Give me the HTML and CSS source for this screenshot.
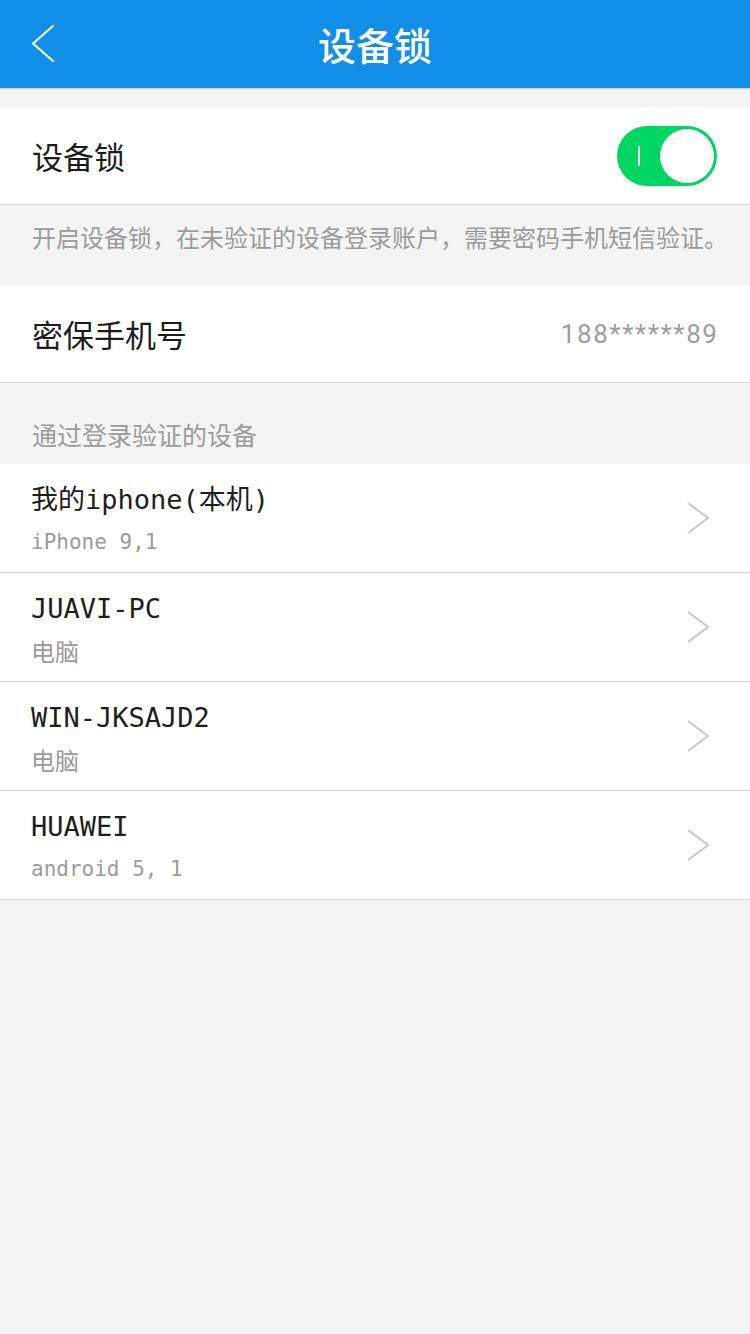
FILE: index.html
```html
<!DOCTYPE html>
<html lang="zh-CN">
<head>
<meta charset="utf-8">
<title>设备锁</title>
<link rel="stylesheet" href="styles.css">
</head>
<body>
<div class="app">
  <header class="nav">
    <a class="back" href="#" aria-label="返回">
      <svg width="24" height="40" viewBox="0 0 24 40"><polyline points="22,2 2,19.5 22,37" fill="none" stroke="#fff" stroke-width="2.2" stroke-linecap="round" stroke-linejoin="round"/></svg>
    </a>
    <h1 class="nav-title">设备锁</h1>
    <span class="nav-side"></span>
  </header>

  <div class="gap"></div>

  <div class="cell">
    <span class="cell-label">设备锁</span>
    <span class="toggle"><span class="toggle-bar"></span><span class="toggle-knob"></span></span>
  </div>

  <p class="note">开启设备锁，在未验证的设备登录账户，需要密码手机短信验证。</p>

  <div class="cell">
    <span class="cell-label">密保手机号</span>
    <span class="cell-value">188******89</span>
  </div>

  <div class="section">通过登录验证的设备</div>

  <ul class="devices">
    <li class="device">
      <div class="device-info">
        <div class="device-name">我的iphone(本机)</div>
        <div class="device-sub">iPhone 9,1</div>
      </div>
      <svg class="chev" width="22" height="32" viewBox="0 0 22 32"><polyline points="1,1 21,16 1,31" fill="none" stroke="#c8c8c8" stroke-width="2"/></svg>
    </li>
    <li class="device">
      <div class="device-info">
        <div class="device-name">JUAVI-PC</div>
        <div class="device-sub cn">电脑</div>
      </div>
      <svg class="chev" width="22" height="32" viewBox="0 0 22 32"><polyline points="1,1 21,16 1,31" fill="none" stroke="#c8c8c8" stroke-width="2"/></svg>
    </li>
    <li class="device">
      <div class="device-info">
        <div class="device-name">WIN-JKSAJD2</div>
        <div class="device-sub cn">电脑</div>
      </div>
      <svg class="chev" width="22" height="32" viewBox="0 0 22 32"><polyline points="1,1 21,16 1,31" fill="none" stroke="#c8c8c8" stroke-width="2"/></svg>
    </li>
    <li class="device">
      <div class="device-info">
        <div class="device-name">HUAWEI</div>
        <div class="device-sub">android 5, 1</div>
      </div>
      <svg class="chev" width="22" height="32" viewBox="0 0 22 32"><polyline points="1,1 21,16 1,31" fill="none" stroke="#c8c8c8" stroke-width="2"/></svg>
    </li>
  </ul>
</div>
</body>
</html>
```

FILE: styles.css
```css
* { box-sizing: border-box; }
html, body {
  margin: 0;
  padding: 0;
  background: #f4f4f4;
}
body {
  font-family: "Noto Sans CJK SC", "Noto Sans", sans-serif;
  color: #1e1e1e;
}
.app {
  width: 750px;
  min-height: 1334px;
  background: #f4f4f4;
}
.nav {
  height: 89px;
  background: #108ee8;
  border-bottom: 1px solid #cfcfcf;
  display: grid;
  grid-template-columns: 1fr auto 1fr;
  align-items: center;
  padding: 0 31px;
}
.back {
  display: flex;
  align-items: center;
  width: 24px;
  height: 40px;
}
.back svg { display: block; }
.nav-title {
  margin: 0;
  font-size: 38px;
  font-weight: 500;
  color: #fff;
  line-height: 88px;
}
.gap { height: 18px; }
.cell {
  height: 98px;
  background: #fff;
  border-bottom: 1px solid #d6d6d6;
  display: flex;
  align-items: center;
  justify-content: space-between;
  padding: 0 33px 0 32px;
}
.cell-label {
  font-size: 31px;
  line-height: 40px;
  color: #1c1c1c;
}
.cell-value {
  font-family: Roboto, "Liberation Sans", sans-serif;
  font-size: 26px;
  letter-spacing: 1.6px;
  margin-right: -1.6px;
  color: #9d9d9d;
}
.toggle {
  width: 100px;
  height: 60px;
  border-radius: 30px;
  background: #00d763;
  display: flex;
  align-items: center;
  justify-content: space-between;
  padding: 0 3px 0 21px;
}
.toggle-bar {
  width: 2px;
  height: 20px;
  background: #fff;
}
.toggle-knob {
  width: 54px;
  height: 54px;
  border-radius: 50%;
  background: #fff;
}
.note {
  margin: 0;
  height: 80px;
  padding: 17px 32px 0;
  font-size: 24px;
  line-height: 30px;
  color: #9b9b9b;
  white-space: nowrap;
}
.section {
  height: 81px;
  padding: 36px 32px 0;
  font-size: 25px;
  line-height: 30px;
  color: #9b9b9b;
}
.devices {
  list-style: none;
  margin: 0;
  padding: 0;
}
.device {
  height: 109px;
  background: #fff;
  border-bottom: 1px solid #d6d6d6;
  display: flex;
  align-items: center;
  justify-content: space-between;
  padding: 0 41px 0 31px;
}
.device-info {
  display: flex;
  flex-direction: column;
  padding-top: 2px;
}
.device-name {
  font-family: "DejaVu Sans Mono", "Noto Sans CJK SC", monospace;
  font-size: 27px;
  line-height: 38px;
  color: #1e1e1e;
}
.device-sub {
  font-family: "DejaVu Sans Mono", "Noto Sans CJK SC", monospace;
  font-size: 21px;
  line-height: 30px;
  margin-top: 8px;
  color: #9b9b9b;
}
.device-sub.cn {
  font-family: "Noto Sans CJK SC", sans-serif;
  font-size: 24px;
}
.chev { display: block; }
```
